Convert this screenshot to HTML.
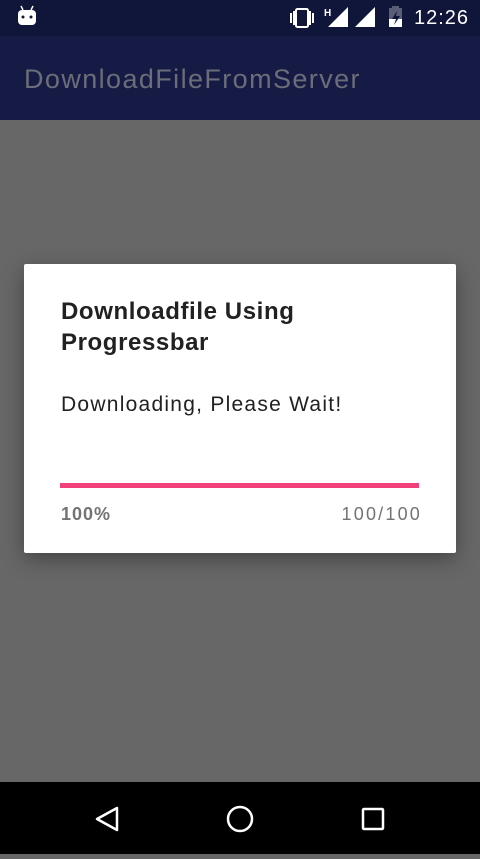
<!DOCTYPE html>
<html><head><meta charset="utf-8"><style>
*{margin:0;padding:0;box-sizing:border-box}
body{width:480px;height:854px;overflow:hidden;background:#676767;font-family:"Liberation Sans",Roboto,sans-serif;position:relative}
.sb{position:absolute;left:0;top:0;width:480px;height:36px;background:#10153a}
.ab{position:absolute;left:0;top:36px;width:480px;height:84px;background:#161b45}
.ab span{position:absolute;left:24px;top:28px;font-size:27px;color:#6b6d78;letter-spacing:1.4px}
.dlg{position:absolute;left:24px;top:264px;width:432px;height:289px;background:#fff;border-radius:2px;box-shadow:0 6px 20px rgba(0,0,0,.35)}
.t{position:absolute;left:37px;top:32px;font-size:24px;line-height:31px;color:#212121;font-weight:bold;letter-spacing:0.6px}
.m{position:absolute;left:37px;top:129px;font-size:21px;color:#212121;letter-spacing:1.25px}
.bar{position:absolute;left:36px;top:219px;width:359px;height:5px;background:#f2407b}
.p{position:absolute;left:37px;top:240px;font-size:18px;color:#737373;font-weight:bold;letter-spacing:1px}
.n{position:absolute;right:36px;top:240px;font-size:18px;color:#737373;letter-spacing:2.2px;margin-right:-2px}
.nav{position:absolute;left:0;top:782px;width:480px;height:72px;background:#000}
.time{position:absolute;left:414px;top:7px;color:#fff;font-size:20px;letter-spacing:1px}
</style></head><body>
<div class="sb">
<svg width="480" height="36" style="position:absolute;left:0;top:0">
<rect x="18" y="10" width="18" height="15" rx="4" fill="#fff"/>
<line x1="21" y1="6" x2="23" y2="10" stroke="#fff" stroke-width="1.5"/>
<line x1="33" y1="6" x2="31" y2="10" stroke="#fff" stroke-width="1.5"/>
<circle cx="23" cy="17" r="1.5" fill="#10153a"/><circle cx="31" cy="17" r="1.5" fill="#10153a"/>
<rect x="296" y="9" width="12" height="18" rx="1.5" fill="none" stroke="#fff" stroke-width="2"/>
<rect x="290" y="13" width="2" height="10" fill="#fff"/><rect x="312" y="13" width="2" height="10" fill="#fff"/>
<rect x="293" y="11" width="2" height="14" fill="#fff"/><rect x="309" y="11" width="2" height="14" fill="#fff"/>
<text x="324" y="16" font-size="10" fill="#fff" font-family="Liberation Sans" font-weight="bold">H</text>
<polygon points="328,27 348,7 348,27" fill="#fff"/>
<polygon points="355,27 375,7 375,27" fill="#fff"/>
<rect x="389" y="8" width="13" height="19" fill="#5a5d78"/><rect x="392" y="6" width="7" height="3" fill="#5a5d78"/>
<rect x="389" y="19" width="13" height="8" fill="#fff"/>
<polygon points="397,11 392,19 396,19 394,25 400,16 396,16" fill="#10153a"/>
</svg>
<span class="time">12:26</span>
</div>
<div class="ab"><span>DownloadFileFromServer</span></div>
<div class="dlg">
<div class="t">Downloadfile Using<br>Progressbar</div>
<div class="m">Downloading, Please Wait!</div>
<div class="bar"></div>
<div class="p">100%</div>
<div class="n">100/100</div>
</div>
<div class="nav">
<svg width="480" height="72">
<polygon points="117,26 117,48 97,37" fill="none" stroke="#fff" stroke-width="2.5" stroke-linejoin="round"/>
<circle cx="240" cy="37" r="12" fill="none" stroke="#fff" stroke-width="2.5"/>
<rect x="363" y="27" width="20" height="20" rx="1" fill="none" stroke="#fff" stroke-width="2.5"/>
</svg>
</div>
</body></html>
